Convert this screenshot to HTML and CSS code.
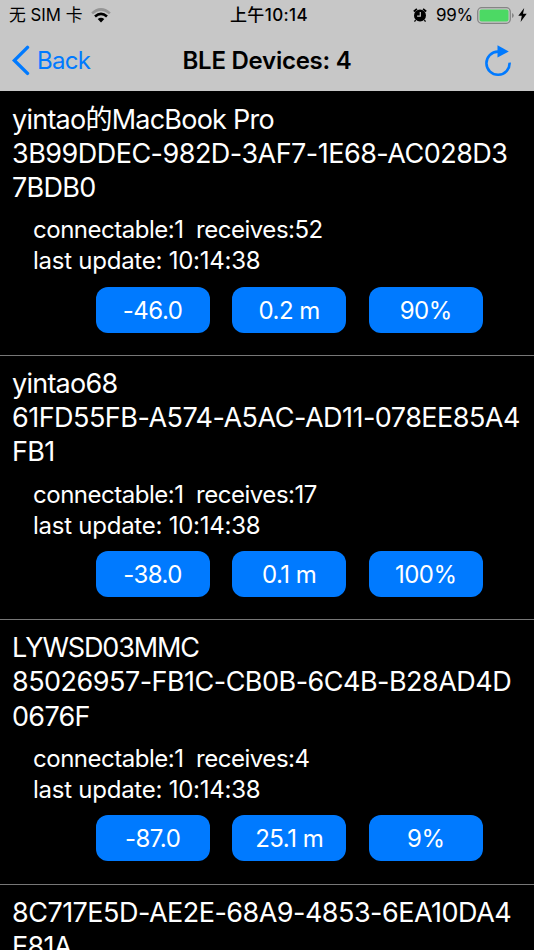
FILE: index.html
```html
<!DOCTYPE html>
<html lang="zh-CN">
<head>
<meta charset="utf-8">
<title>BLE Devices</title>
<link rel="stylesheet" href="styles.css">
</head>
<body>
<header class="top">
  <div class="status">
    <div class="status-left"><span class="carrier">无 SIM 卡</span>
      <svg class="wifi" width="20" height="15" viewBox="0 0 20 15"><g fill="none" stroke-width="2.6"><path d="M1.1 5.4Q10 -2.5 18.9 5.4" stroke="#959595"/><path d="M4 8.5Q10 3.1 16 8.5" stroke="#000"/></g><path d="M6.7 11.1Q10 8.3 13.3 11.1L10 14.4Z"/></svg>
    </div>
    <div class="clock">上午10:14</div>
    <div class="status-right">
      <svg class="alarm" width="14" height="14" viewBox="0 0 14 14"><circle cx="7" cy="7.6" r="6"/><path d="M.8 3.5L3.9.8M10.1.8l3.1 2.7" stroke="#000" stroke-width="1.7"/><path d="M2.6 12l-1.1 1.6M11.4 12l1.1 1.6" stroke="#000" stroke-width="1.3"/><path d="M7.3 4.1v4H4.1" fill="none" stroke="#c7c7c7" stroke-width="1.2"/></svg>
      <span class="percent">99%</span>
      <svg class="battery" width="38" height="17" viewBox="0 0 38 17"><rect x=".7" y=".7" width="32.6" height="15.6" rx="4" fill="none" stroke="#858585" stroke-width="1.3"/><rect x="2.5" y="2.5" width="29" height="12" rx="2" fill="#4cd964"/><path d="M35 6q1.8.8 1.8 2.5T35 11Z" fill="#858585"/></svg>
      <svg class="bolt" width="9" height="14" viewBox="0 0 9 14"><path d="M6.2 0L.3 7.8h3.5L2.6 14 8.7 5.8H5Z"/></svg>
    </div>
  </div>
  <nav class="nav">
    <a class="back"><svg width="18" height="31" viewBox="0 0 18 31"><path d="M15.5 2.4L2.4 15.4l13.1 13" fill="none" stroke="#007aff" stroke-width="3.4" stroke-linecap="round" stroke-linejoin="miter"/></svg><span>Back</span></a>
    <h1>BLE Devices: 4</h1>
    <svg class="refresh" width="28" height="32" viewBox="0 0 28 32"><path d="M14 6.6A11.6 11.6 0 1 0 25.6 17.6" fill="none" stroke="#007aff" stroke-width="2.6"/><path d="M13.5.2L24.8 6.4 13.5 12.6Z" fill="#007aff"/></svg>
  </nav>
</header>
<main>
  <section class="device">
    <h2><span class="name">yintao的MacBook Pro</span><span>3B99DDEC-982D-3AF7-1E68-AC028D3</span><span class="tail">7BDB0</span></h2>
    <div class="details"><span>connectable:1&nbsp; receives:52</span><span class="updated">last update: 10:14:38</span></div>
    <div class="buttons"><button>-46.0</button><button>0.2 m</button><button>90%</button></div>
  </section>
  <section class="device">
    <h2><span class="name">yintao68</span><span>61FD55FB-A574-A5AC-AD11-078EE85A4</span><span class="tail">FB1</span></h2>
    <div class="details"><span>connectable:1&nbsp; receives:17</span><span class="updated">last update: 10:14:38</span></div>
    <div class="buttons"><button>-38.0</button><button>0.1 m</button><button>100%</button></div>
  </section>
  <section class="device">
    <h2><span class="name caps">LYWSD03MMC</span><span>85026957-FB1C-CB0B-6C4B-B28AD4D</span><span class="tail">0676F</span></h2>
    <div class="details"><span>connectable:1&nbsp; receives:4</span><span class="updated">last update: 10:14:38</span></div>
    <div class="buttons"><button>-87.0</button><button>25.1 m</button><button>9%</button></div>
  </section>
  <section class="device">
    <h2><span>8C717E5D-AE2E-68A9-4853-6EA10DA4</span><span class="tail">E81A</span></h2>
  </section>
</main>
</body>
</html>
```
FILE: styles.css
```css
* { box-sizing: border-box; margin: 0; padding: 0; }
body { height: 950px; overflow: hidden; background: #000; color: #fff; font-family: Inter, "Noto Sans CJK SC", sans-serif; display: flex; flex-direction: column; }
svg { display: block; flex: none; }
.top { height: 91px; flex: none; background: #c7c7c7; color: #000; }
.status { height: 30px; display: grid; grid-template-columns: 1fr auto 1fr; align-items: center; font-size: 17px; line-height: 30px; white-space: nowrap; }
.status-left { display: flex; align-items: center; gap: 9px; padding-left: 9px; }
.carrier { font-weight: 400; font-size: 16.8px; }
.clock { font-weight: 500; padding-left: 4px; letter-spacing: .4px; }
.status-right { display: flex; align-items: center; justify-content: flex-end; padding-right: 7px; }
.percent { margin: 0 4px 0 9px; letter-spacing: -.3px; }
.bolt { margin-left: 3px; }
.nav { height: 61px; display: grid; grid-template-columns: 1fr auto 1fr; align-items: center; padding: 0 22px 0 12px; }
.back { display: flex; align-items: center; gap: 7px; color: #007aff; font-size: 24px; letter-spacing: -.7px; }
.nav h1 { font-size: 24px; font-weight: 600; white-space: nowrap; letter-spacing: -.25px; margin-left: 10px; }
.refresh { justify-self: end; }
main { flex: none; height: 859px; padding-top: .7px; overflow: hidden; }
.device { height: 264.3px; padding: 11px 12px 0; border-bottom: 1px solid #777; }
h2 { font-size: 27px; line-height: 34.2px; font-weight: 400; letter-spacing: -.52px; }
.name { letter-spacing: -.76px; }
.caps { letter-spacing: -1.15px; }
.tail { letter-spacing: -.7px; }
h2 span, .details span { display: block; white-space: nowrap; height: 34.2px; }
.details { padding: 9px 0 0 21px; font-size: 24px; line-height: 31.2px; letter-spacing: -.48px; }
.details span { height: 31.2px; }
.details .updated { letter-spacing: -.25px; }
.buttons { display: flex; gap: 22.6px; padding: 10px 0 0 83.6px; }
button { width: 114px; height: 46px; padding-top: 1px; border: 0; border-radius: 12px; background: #007aff; color: #fff; font: 24px/46px Inter, sans-serif; letter-spacing: -.5px; white-space: nowrap; }
```
